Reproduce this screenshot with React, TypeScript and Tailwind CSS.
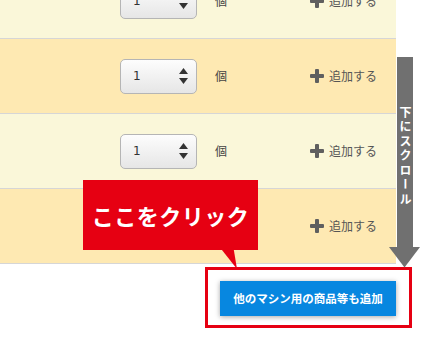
import React from "react";

const JP = { fontFamily: '"Noto Sans CJK JP", "Noto Sans", sans-serif' };

function Spinner() {
  return (
    <div className="flex h-[35px] w-[77px] items-center justify-between rounded-[5px] border border-[#b5b5b5] bg-gradient-to-b from-[#fdfdfd] to-[#e6e6e6] pl-[12px] pr-[8px]">
      <span className="text-[12px] text-[#333]" style={{ fontFamily: '"DejaVu Sans", sans-serif' }}>1</span>
      <svg width="9" height="16" viewBox="0 0 9 16">
        <polygon points="4.5,0 9,6 0,6" fill="#333" />
        <polygon points="0,10 9,10 4.5,16" fill="#333" />
      </svg>
    </div>
  );
}

function Plus() {
  return (
    <svg width="14" height="14" viewBox="0 0 14 14">
      <rect x="5" y="0" width="4" height="14" rx="1" fill="#5f5f5f" />
      <rect x="0" y="5" width="14" height="4" rx="1" fill="#5f5f5f" />
    </svg>
  );
}

function Row({ bg }: { bg: string }) {
  return (
    <div className={`flex h-[75px] items-center border-b border-[#d6d6d6] pl-[120px] ${bg}`}>
      <Spinner />
      <span className="ml-[18px] text-[12px] text-[#444]" style={JP}>個</span>
      <div className="ml-[83px] flex items-center gap-[5px]">
        <Plus />
        <span className="text-[12px] text-[#555]" style={JP}>追加する</span>
      </div>
    </div>
  );
}

export default function App() {
  return (
    <div className="relative h-[350px] w-[430px] overflow-hidden bg-white" style={JP}>
      <div className="-mt-[36px] w-[396px]">
        <Row bg="bg-[#faf7d9]" />
        <Row bg="bg-[#fee9b2]" />
        <Row bg="bg-[#faf7d9]" />
        <Row bg="bg-[#fee9b2]" />
      </div>
      <div className="flex w-[396px] justify-end pt-[17px]">
        <button className="h-[35px] w-[176px] bg-[#0787e0] text-[11.5px] font-bold text-white shadow-[0_1px_5px_rgba(0,0,0,0.35)]" style={JP}>
          他のマシン用の商品等も追加
        </button>
      </div>

      {/* red outline annotation */}
      <div className="absolute left-[205px] top-[267px] h-[61px] w-[207px] border-[3px] border-[#e60012]" />

      {/* callout */}
      <svg className="absolute left-[215px] top-[245px]" width="30" height="26" viewBox="0 0 30 26">
        <polygon points="3,0 18,0 22,24" fill="#e60012" />
      </svg>
      <div className="absolute left-[83px] top-[180px] flex h-[70px] w-[175px] items-center justify-center bg-[#e60012]">
        <span className="text-[22px] font-bold leading-none tracking-[0.5px] text-white" style={JP}>ここをクリック</span>
      </div>

      {/* scroll arrow */}
      <svg className="absolute left-[389px] top-[57px]" width="31" height="211" viewBox="0 0 31 211">
        <rect x="8" y="0" width="16" height="191" fill="#707070" />
        <polygon points="0,190 31,190 15.5,210.5" fill="#707070" />
      </svg>
      <div
        className="absolute left-[397px] top-[106px] flex w-[16px] justify-center text-[12px] font-bold leading-[16px] tracking-[2.5px] text-white [writing-mode:vertical-rl]"
        style={JP}
      >
        下にスクロール
      </div>
    </div>
  );
}
